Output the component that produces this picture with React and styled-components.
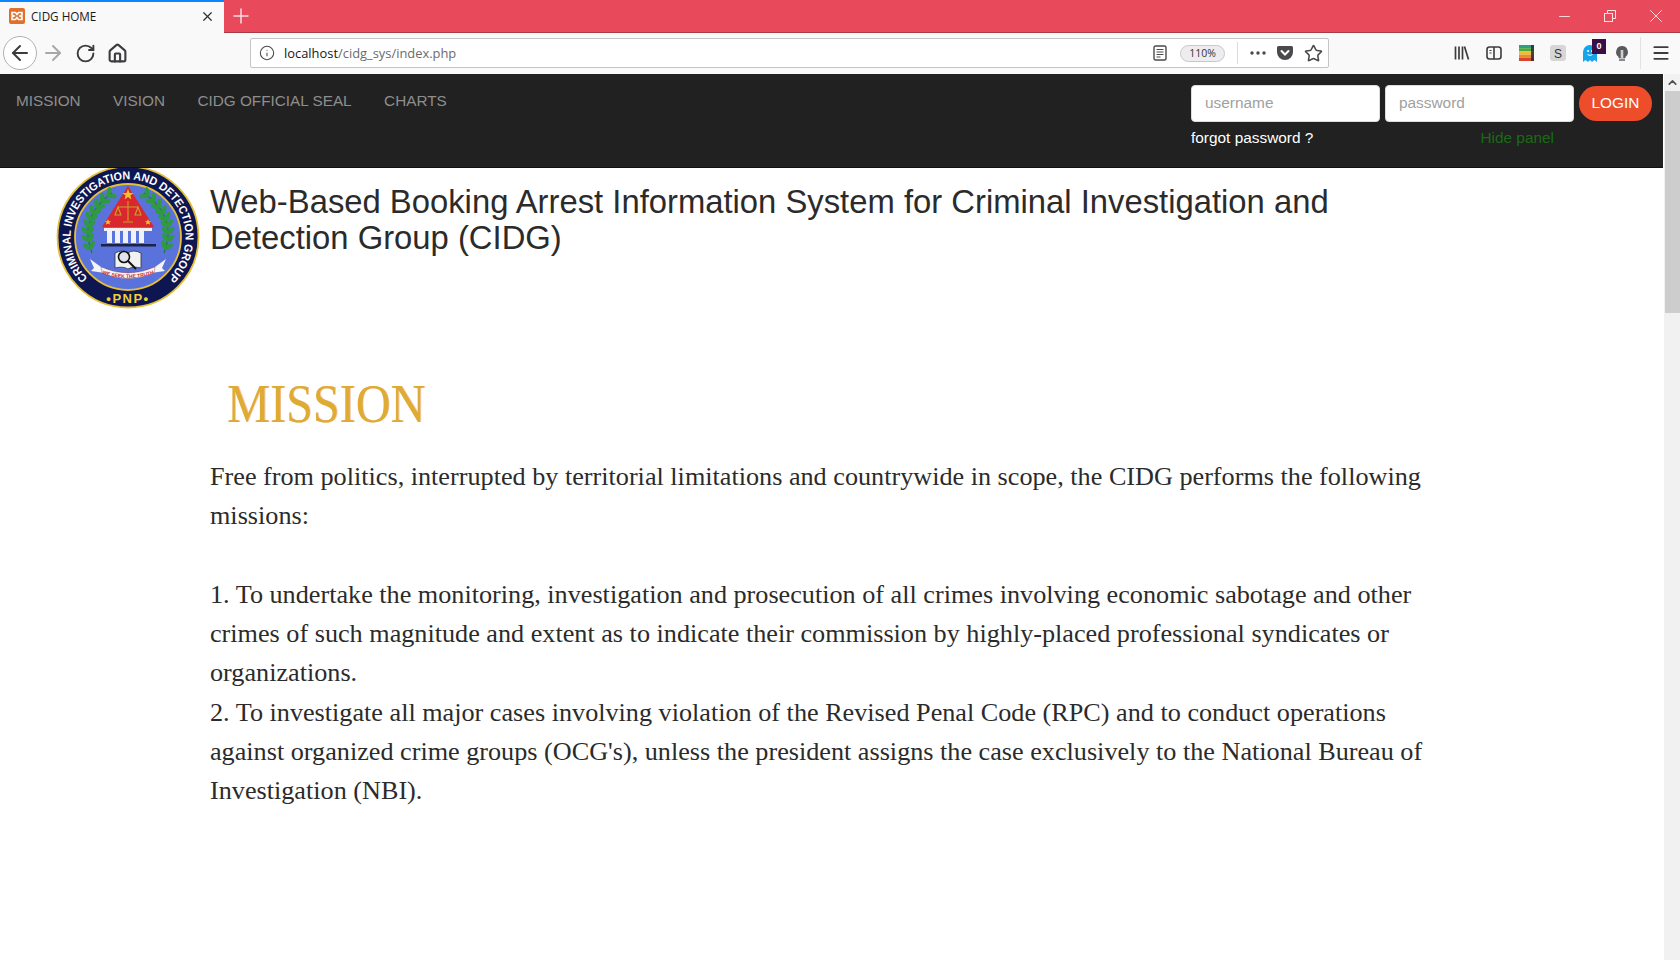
import React from 'react';
import styled, { createGlobalStyle } from 'styled-components';
import { ArrowLeft, ArrowRight, RotateCw, Home, Info, Star, X, Plus, Minus, Menu, ChevronUp } from 'lucide-react';

const Global = createGlobalStyle`
  html, body { margin: 0; padding: 0; height: 100%; overflow: hidden; background: #fff; }
  * { box-sizing: border-box; }
`;

const Page = styled.div`
  width: 1680px;
  height: 960px;
  display: flex;
  flex-direction: column;
  overflow: hidden;
  font-family: "Liberation Sans", Arial, sans-serif;
`;

const TabBar = styled.div`
  height: 33px;
  flex: none;
  display: flex;
  align-items: stretch;
  background: #e84a5c;
  border-bottom: 1px solid #a83a48;
`;

const Tab = styled.div`
  width: 224px;
  height: 33px;
  display: flex;
  align-items: center;
  padding: 0 9px 3px;
  gap: 6px;
  background: #f9f9fa;
  border-top: 2px solid #0a84ff;
  font-family: "Open Sans", sans-serif;
  font-size: 11.7px;
  color: #18181a;
`;

const TabTitle = styled.span`
  flex: 1;
`;

const NewTab = styled.div`
  width: 34px;
  display: flex;
  align-items: center;
  justify-content: center;
  color: #fbdde0;
`;

const WindowControls = styled.div`
  margin-left: auto;
  display: flex;
  align-items: stretch;
  padding-right: 1px;
  color: #fbe4e6;
`;

const WinButton = styled.div`
  width: 46px;
  display: flex;
  align-items: center;
  justify-content: center;
`;

const Toolbar = styled.div`
  height: 41px;
  flex: none;
  display: flex;
  align-items: center;
  background: #f9f9fa;
  padding: 0 0 1px 3px;
`;

const BackButton = styled.div`
  width: 34px;
  height: 34px;
  border-radius: 50%;
  border: 1px solid #b1b1b3;
  background: #fff;
  display: flex;
  align-items: center;
  justify-content: center;
  color: #3c3c3e;
`;

const ToolButton = styled.div`
  width: 32px;
  height: 32px;
  display: flex;
  align-items: center;
  justify-content: center;
  color: ${p => p.$dim ? '#a8a8aa' : '#3c3c3e'};
`;

const UrlBar = styled.div`
  width: 1079px;
  height: 30px;
  margin-left: 117px;
  display: flex;
  align-items: center;
  background: #fff;
  border: 1px solid #c4c4c6;
  border-radius: 2px;
  padding: 0 5px 0 8px;
  font-family: "Open Sans", sans-serif;
  font-size: 12.9px;
  color: #6b6b6d;
`;

const UrlInfo = styled.div`
  width: 25px;
  display: flex;
  color: #4a4a4c;
`;

const UrlHost = styled.span`
  color: #17171a;
`;

const UrlPath = styled.span`
  flex: 1;
`;

const ReaderSlot = styled.div`
  display: flex;
  color: #4a4a4c;
  margin-right: 13px;
`;

const ZoomPill = styled.div`
  width: 45px;
  height: 17px;
  margin-right: 12px;
  border-radius: 9px;
  border: 1px solid #c8c8ca;
  background: #ededf0;
  font-size: 10.5px;
  line-height: 15px;
  text-align: center;
  color: #333;
`;

const UrlSep = styled.div`
  width: 1px;
  height: 22px;
  background: #dcdcde;
  margin-right: 12px;
`;

const UrlIcons = styled.div`
  display: flex;
  align-items: center;
  gap: 11px;
  color: #4a4a4c;
`;

const Extensions = styled.div`
  margin-left: 124px;
  display: flex;
  align-items: center;
  gap: 14px;
  color: #3c3c3e;
`;

const MenuArea = styled.div`
  margin-left: 9px;
  display: flex;
  align-items: center;
  gap: 10px;
  color: #3c3c3e;
`;

const ExtSep = styled.div`
  width: 1px;
  height: 32px;
  background: #e2e2e4;
`;

const Badge = styled.span`
  position: absolute;
  top: -5px;
  right: -7px;
  width: 14px;
  height: 15px;
  background: #3a0f47;
  color: #fff;
  font-size: 9px;
  font-weight: 700;
  line-height: 14px;
  text-align: center;
`;

const ExtIcon = styled.div`
  position: relative;
  width: 18px;
  height: 18px;
  display: flex;
  align-items: center;
  justify-content: center;
`;

const Viewport = styled.div`
  flex: 1;
  min-height: 0;
  display: flex;
`;

const Content = styled.div`
  width: 1663px;
  flex: none;
  background: #fff;
`;

const Scrollbar = styled.div`
  width: 17px;
  flex: none;
  display: flex;
  flex-direction: column;
  align-items: center;
  background: #f1f1f1;
  border-left: 1px solid #fff;
`;

const ScrollArrow = styled.div`
  height: 17px;
  display: flex;
  align-items: center;
  justify-content: center;
  color: #505050;
`;

const ScrollThumb = styled.div`
  width: 15px;
  height: 222px;
  background: #cdcdcd;
`;

const NavBar = styled.nav`
  height: 94px;
  display: flex;
  justify-content: space-between;
  align-items: flex-start;
  background: #212121;
  padding: 11px 11px 0 16px;
  border-bottom: 1px solid #111;
`;

const NavLinks = styled.div`
  display: flex;
  gap: 32.5px;
  padding-top: 6px;
`;

const NavLink = styled.a`
  font-size: 15.3px;
  line-height: 20px;
  color: #8e8e8e;
`;

const LoginPanel = styled.div`
  width: 461px;
  display: flex;
  flex-direction: column;
`;

const LoginRow = styled.div`
  display: flex;
  align-items: center;
  gap: 5px;
`;

const Field = styled.input`
  width: 189px;
  height: 37px;
  border: 1px solid #ddd;
  border-radius: 4px;
  background: #fff;
  padding: 0 13px 2px;
  font-family: "Liberation Sans", sans-serif;
  font-size: 15.4px;
  outline: none;
  &::placeholder { color: #a0a0a0; opacity: 1; }
`;

const LoginButton = styled.button`
  width: 73px;
  height: 35px;
  border: 0;
  border-radius: 18px;
  background: #ee4d2b;
  color: #fff;
  padding: 0 0 2px;
  font-family: "Liberation Sans", sans-serif;
  font-size: 15.4px;
`;

const PanelLinks = styled.div`
  display: flex;
  justify-content: space-between;
  padding: 7px 98px 0 0;
  font-size: 15.4px;
  line-height: 18px;
`;

const Forgot = styled.a`
  color: #fff;
`;

const HidePanel = styled.a`
  color: #1a6a14;
`;

const Header = styled.header`
  display: flex;
  align-items: flex-start;
  padding-left: 56px;
  gap: 10px;
`;

const SealSvg = styled.svg`
  width: 144px;
  height: 141px;
  flex: none;
  display: block;
`;

const Title = styled.h1`
  margin: 16px 0 0;
  width: 1180px;
  font-size: 32.8px;
  line-height: 35.6px;
  font-weight: 400;
  color: #2b2b2b;
`;

const Main = styled.main`
  padding: 63px 0 0 210px;
`;

const MissionHead = styled.div`
  margin-left: 17px;
  font-family: "Liberation Serif", serif;
  font-size: 54.5px;
  line-height: 64px;
  color: #dfab33;
  text-shadow: 1px 0 0 rgba(232, 150, 110, 0.5);
  transform: scaleX(0.885);
  transform-origin: left center;
`;

const Body = styled.p`
  margin: 21px 0 0;
  width: 1222px;
  font-family: "Liberation Serif", serif;
  font-size: 26.2px;
  line-height: 39.3px;
  color: #2b2b2b;
`;

function Favicon() {
  return (
    <svg width="16" height="16" viewBox="0 0 16 16">
      <rect width="16" height="16" rx="2" fill="#e1702b" />
      <path d="M3 4.500h3.500L8 6.500l1.500-2H13v2.500L11 8l2 1v2.500H9.500L8 9.500l-1.500 2H3V9l2-1-2-1z" fill="none" stroke="#fff" strokeWidth="1.600" />
    </svg>
  );
}

function RestoreIcon() {
  return (
    <svg width="12" height="12" viewBox="0 0 12 12" fill="none" stroke="currentColor">
      <rect x="0.500" y="3.500" width="8" height="8" />
      <path d="M3.500 3.500V0.500H11.500V8.500H8.500" />
    </svg>
  );
}

function ReaderIcon() {
  return (
    <svg width="14" height="16" viewBox="0 0 14 16" fill="none" stroke="currentColor" strokeWidth="1.400">
      <rect x="1" y="1" width="12" height="14" rx="1.500" />
      <path d="M3.500 4.500h7M3.500 7h7M3.500 9.500h7M3.500 12h4" strokeWidth="1" />
    </svg>
  );
}

function DotsIcon() {
  return (
    <svg width="16" height="4" viewBox="0 0 16 4" fill="currentColor">
      <circle cx="2" cy="2" r="1.700" />
      <circle cx="8" cy="2" r="1.700" />
      <circle cx="14" cy="2" r="1.700" />
    </svg>
  );
}

function PocketIcon() {
  return (
    <svg width="16" height="16" viewBox="0 0 16 16">
      <path d="M1.500 1h13A1.500 1.500 0 0 1 16 2.500V7A8 8 0 0 1 0 7V2.500A1.500 1.500 0 0 1 1.500 1z" fill="#4a4a4c" />
      <path d="M4.500 6 8 9.500 11.500 6" fill="none" stroke="#fff" strokeWidth="2" strokeLinecap="round" />
    </svg>
  );
}

function LibraryIcon() {
  return (
    <svg width="16" height="16" viewBox="0 0 16 16" stroke="currentColor" strokeWidth="1.700" fill="none">
      <path d="M1.500 1.500v13M5 1.500v13M8.500 1.500v13M10.500 1.500l4 13" />
    </svg>
  );
}

function SidebarIcon() {
  return (
    <svg width="16" height="16" viewBox="0 0 16 16" fill="none" stroke="currentColor" strokeWidth="1.600">
      <rect x="1" y="2" width="14" height="12" rx="2.500" />
      <path d="M8 2v12" />
      <path d="M3.500 5.500h2M3.500 8h2" strokeWidth="1.200" />
    </svg>
  );
}

function StackIcon() {
  return (
    <svg width="15" height="16" viewBox="0 0 15 16">
      <rect y="0" width="15" height="3.200" fill="#2f9c88" />
      <rect y="3.200" width="15" height="3.200" fill="#4aa93e" />
      <rect y="6.400" width="15" height="3.200" fill="#e8c22c" />
      <rect y="9.600" width="15" height="3.200" fill="#ec8a2d" />
      <rect y="12.800" width="15" height="3.200" fill="#d8452f" />
      <rect x="12" width="3" height="16" fill="#2e2e30" fillOpacity="0.850" />
    </svg>
  );
}

function SyncIcon() {
  return (
    <svg width="16" height="16" viewBox="0 0 16 16">
      <rect width="16" height="16" rx="3" fill="#d6d6d6" />
      <text x="8" y="12.500" textAnchor="middle" fontSize="12" fontFamily="Liberation Sans, sans-serif" fill="#333">S</text>
    </svg>
  );
}

function GhostIcon() {
  return (
    <svg width="14" height="18" viewBox="0 0 14 18">
      <path d="M0 8a7 7 0 0 1 14 0v10l-2.500-2-2.500 2-2-2-2 2-2.500-2L0 18z" fill="#15a5e8" />
      <circle cx="5" cy="7" r="1" fill="#fff" />
      <circle cx="9" cy="7" r="1" fill="#fff" />
      <path d="M4.500 10.500q2.500 2 5 0" stroke="#fff" fill="none" />
    </svg>
  );
}

function BulbIcon() {
  return (
    <svg width="14" height="16" viewBox="0 0 14 16">
      <path d="M7 1a6 6 0 0 1 3.500 10.800V13h-7v-1.200A6 6 0 0 1 7 1z" fill="#5a5a5c" />
      <rect x="5.700" y="5" width="2.600" height="8" fill="#cfcfcf" />
      <rect x="4" y="13.500" width="6" height="2.500" fill="#8a8a8c" />
    </svg>
  );
}

// one laurel branch, leaves set in pairs along a curved stem
function Laurel({ flip }) {
  const p0 = [36, 88];
  const p1 = [22, 52];
  const p2 = [56, 28];
  const leaves = [];
  for (let i = 0; i < 9; i++) {
    const t = 0.06 + i * 0.11;
    const u = 1 - t;
    const x = u * u * p0[0] + 2 * u * t * p1[0] + t * t * p2[0];
    const y = u * u * p0[1] + 2 * u * t * p1[1] + t * t * p2[1];
    const dx = 2 * u * (p1[0] - p0[0]) + 2 * t * (p2[0] - p1[0]);
    const dy = 2 * u * (p1[1] - p0[1]) + 2 * t * (p2[1] - p1[1]);
    const a = Math.atan2(dy, dx) * 180 / Math.PI + 90;
    leaves.push(<ellipse key={`a${i}`} cx={x} cy={y} rx="2.300" ry="4.800" fill="#2f9a42" transform={`rotate(${a - 40} ${x} ${y}) translate(0 -4)`} />);
    leaves.push(<ellipse key={`b${i}`} cx={x} cy={y} rx="2.300" ry="4.800" fill="#2f9a42" transform={`rotate(${a + 40} ${x} ${y}) translate(0 -4)`} />);
  }
  return (
    <g transform={flip ? 'translate(144 0) scale(-1 1)' : undefined}>
      <path d="M36 88Q22 52 56 28" fill="none" stroke="#1f7a33" strokeWidth="1.200" />
      {leaves}
    </g>
  );
}

function Seal() {
  return (
    <SealSvg viewBox="0 3 144 141">
      <defs>
        <path id="ringText" d="M35 116A57.500 57.500 0 1 1 109 116" />
        <path id="ribbonText" d="M44 108Q72 118 100 108" />
      </defs>
      <circle cx="72" cy="72" r="70.500" fill="#0d1650" stroke="#e5bf3a" strokeWidth="1.800" />
      <circle cx="72" cy="72" r="53" fill="#5a72dc" stroke="#e5bf3a" strokeWidth="1.800" />
      <text fontFamily="Liberation Sans, sans-serif" fontSize="11.500" fontWeight="700" fill="#fff">
        <textPath href="#ringText" startOffset="50%" textAnchor="middle" textLength="272" lengthAdjust="spacingAndGlyphs">CRIMINAL INVESTIGATION AND DETECTION GROUP</textPath>
      </text>
      <text x="72" y="138" textAnchor="middle" fontFamily="Liberation Sans, sans-serif" fontSize="13" fontWeight="700" letterSpacing="1.500" fill="#f2cf33">•PNP•</text>
      <Laurel />
      <Laurel flip />
      <path d="M72 21 98 62H46z" fill="#d9272e" />
      <path d="M72 24l1.500 4h4l-3.200 2.400 1.200 4L72 32l-3.500 2.400 1.200-4-3.200-2.400h4z" fill="#f0c62e" />
      <path d="M52 54l.9 2.200h2.300l-1.800 1.400.7 2.200-2.100-1.300-2.100 1.300.7-2.200-1.800-1.400h2.300zM92 54l.9 2.200h2.300l-1.800 1.400.7 2.200-2.100-1.300-2.100 1.300.7-2.200-1.800-1.400h2.300z" fill="#f0c62e" />
      <path d="M72 36v20M62 42h20M62 42l-3 8h6zM82 42l-3 8h6zM67 57h10" stroke="#c9a126" strokeWidth="1.100" fill="none" />
      <rect x="48" y="63" width="48" height="3" fill="#f1f1f4" />
      <g fill="#eef0fa">
        <rect x="51" y="66" width="5" height="12" />
        <rect x="59" y="66" width="5" height="12" />
        <rect x="67" y="66" width="5" height="12" />
        <rect x="75" y="66" width="5" height="12" />
        <rect x="83" y="66" width="5" height="12" />
      </g>
      <rect x="45" y="79" width="55" height="2.500" fill="#1d2345" />
      <path d="M59 88q8-4 13 0q5-4 13 0v15q-8-2-13 1q-5-3-13-1z" fill="#f2f2f2" stroke="#333" strokeWidth="0.800" />
      <circle cx="68" cy="92" r="5.500" fill="#d8dfe8" fillOpacity="0.7" stroke="#111" strokeWidth="1.600" />
      <path d="M72 96l8 8" stroke="#111" strokeWidth="2" />
      <path d="M34 94l11 8q27 12 54 0l11-8-4 9 3 3-14 2-3-2q-19 8-40 0l-3 2-14-2 3-3z" fill="#f4f4f6" />
      <path d="M45 102q27 12 54 0l-1 6q-26 11-52 0z" fill="#f4f4f6" stroke="#a32" strokeWidth="0.400" />
      <text fontFamily="Liberation Sans, sans-serif" fontSize="5" fontWeight="700" fill="#c62a35">
        <textPath href="#ribbonText" startOffset="50%" textAnchor="middle">WE SEEK THE TRUTH</textPath>
      </text>
    </SealSvg>
  );
}

export default function App() {
  return (
    <Page>
      <Global />
      <TabBar>
        <Tab>
          <Favicon />
          <TabTitle>CIDG HOME</TabTitle>
          <X size={15} strokeWidth={2} color="#333" />
        </Tab>
        <NewTab><Plus size={24} strokeWidth={1.500} /></NewTab>
        <WindowControls>
          <WinButton><Minus size={17} strokeWidth={1.300} /></WinButton>
          <WinButton><RestoreIcon /></WinButton>
          <WinButton><X size={22} strokeWidth={1} /></WinButton>
        </WindowControls>
      </TabBar>
      <Toolbar>
        <BackButton><ArrowLeft size={24} strokeWidth={2} /></BackButton>
        <ToolButton $dim><ArrowRight size={24} strokeWidth={2} /></ToolButton>
        <ToolButton><RotateCw size={21} strokeWidth={2.200} /></ToolButton>
        <ToolButton><Home size={21} strokeWidth={2.400} /></ToolButton>
        <UrlBar>
          <UrlInfo><Info size={16} strokeWidth={1.600} /></UrlInfo>
          <UrlHost>localhost</UrlHost>
          <UrlPath>/cidg_sys/index.php</UrlPath>
          <ReaderSlot><ReaderIcon /></ReaderSlot>
          <ZoomPill>110%</ZoomPill>
          <UrlSep />
          <UrlIcons>
            <DotsIcon />
            <PocketIcon />
            <Star size={19} strokeWidth={2} />
          </UrlIcons>
        </UrlBar>
        <Extensions>
          <ExtIcon><LibraryIcon /></ExtIcon>
          <ExtIcon><SidebarIcon /></ExtIcon>
          <ExtIcon><StackIcon /></ExtIcon>
          <ExtIcon><SyncIcon /></ExtIcon>
          <ExtIcon><GhostIcon /><Badge>0</Badge></ExtIcon>
          <ExtIcon><BulbIcon /></ExtIcon>
        </Extensions>
        <MenuArea>
          <ExtSep />
          <Menu size={20} strokeWidth={2.200} />
        </MenuArea>
      </Toolbar>
      <Viewport>
        <Content>
          <NavBar>
            <NavLinks>
              <NavLink>MISSION</NavLink>
              <NavLink>VISION</NavLink>
              <NavLink>CIDG OFFICIAL SEAL</NavLink>
              <NavLink>CHARTS</NavLink>
            </NavLinks>
            <LoginPanel>
              <LoginRow>
                <Field placeholder="username" />
                <Field placeholder="password" />
                <LoginButton>LOGIN</LoginButton>
              </LoginRow>
              <PanelLinks>
                <Forgot>forgot password ?</Forgot>
                <HidePanel>Hide panel</HidePanel>
              </PanelLinks>
            </LoginPanel>
          </NavBar>
          <Header>
            <Seal />
            <Title>Web-Based Booking Arrest Information System for Criminal Investigation and Detection Group (CIDG)</Title>
          </Header>
          <Main>
            <MissionHead>MISSION</MissionHead>
            <Body>
              Free from politics, interrupted by territorial limitations and countrywide in scope, the CIDG performs the following missions:
              <br /><br />
              1. To undertake the monitoring, investigation and prosecution of all crimes involving economic sabotage and other crimes of such magnitude and extent as to indicate their commission by highly-placed professional syndicates or organizations.
              <br />
              2. To investigate all major cases involving violation of the Revised Penal Code (RPC) and to conduct operations against organized crime groups (OCG's), unless the president assigns the case exclusively to the National Bureau of Investigation (NBI).
            </Body>
          </Main>
        </Content>
        <Scrollbar>
          <ScrollArrow><ChevronUp size={13} strokeWidth={3} /></ScrollArrow>
          <ScrollThumb />
        </Scrollbar>
      </Viewport>
    </Page>
  );
}
